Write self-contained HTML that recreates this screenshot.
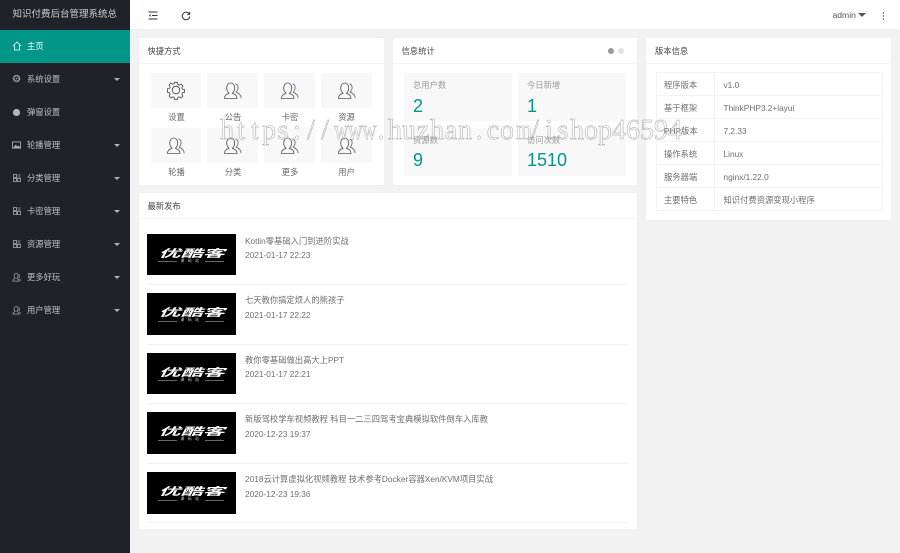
<!DOCTYPE html>
<html lang="zh"><head><meta charset="utf-8"><title>后台</title>
<style>
*{box-sizing:border-box;margin:0;padding:0}
html,body{width:900px;height:553px;overflow:hidden;background:#f2f2f2}
body{font-family:"Liberation Sans","Noto Sans CJK SC",sans-serif;font-size:8.3px;color:#6e6e6e;position:relative;filter:blur(.3px)}
.t{position:absolute;white-space:nowrap;line-height:12px}
.side{position:absolute;left:0;top:0;width:130px;height:553px;background:#20222a}
.top{position:absolute;left:130px;top:0;width:770px;height:29px;background:#fff}
.home{position:absolute;left:0;top:29.500px;width:130px;height:33px;background:#009688}
.m{color:rgba(255,255,255,.7)}
.ar{position:absolute;left:114.300px;margin-top:.5px;width:0;height:0;border:3.200px solid transparent;border-top:3.200px solid rgba(255,255,255,.65);border-bottom:0}
.card{position:absolute;background:#fff;border-radius:1.500px;box-shadow:0 0 1px rgba(0,0,0,.05)}
.hl{position:absolute;left:0;right:0;top:25px;height:1px;background:#f6f6f6}
.ti{color:#444}
.tile{position:absolute;background:#f8f8f8}
.lb{position:absolute;width:51px;text-align:center;color:#666;line-height:12px}
.num{position:absolute;font-size:18px;color:#009688;line-height:20px}
.th{position:absolute;left:147px;width:89px;height:41.500px;background:#000;color:#fff;overflow:hidden}
.logo{position:absolute;left:0;top:12px;width:89px;text-align:center;font:italic 700 10.500px/15px "Noto Sans CJK SC",sans-serif;transform:scaleX(2.100);transform-origin:center}
.sub{position:absolute;left:0;width:89px;top:25px;text-align:center;font-size:3.800px;line-height:5px;color:#ccc;letter-spacing:3.500px}
.sl{position:absolute;height:.5px;top:27.500px;background:#666;width:19px}
.sep{position:absolute;left:147px;width:481px;height:1px;background:#f3f3f3}
.row{position:absolute;left:656px;width:226px;height:1px;background:#f3f3f3}
.wm{position:absolute;left:220px;top:113px;font:28px/36px "Liberation Serif",serif;color:transparent;-webkit-text-stroke:.45px #a0a0a0;white-space:nowrap}
.wm span{display:inline-block;width:14px;text-align:center}
.wm .n{transform:scaleX(.72)}
svg{position:absolute;overflow:visible}
</style></head><body>
<svg width="0" height="0" style="left:0;top:0"><defs>
<g id="u" fill="none" stroke="#555" stroke-width=".85"><path d="M.5 16.500c0-3 1.500-4 4.500-5.200-1.600-1.600-2.300-3.300-2.300-5.300C2.700 3 4.500 1 6.700 1s4 2 4 5c0 2-.7 3.700-2.300 5.300 3 1.200 4.500 2.200 4.500 5.200z"/><path d="M11.500 1.800c2.200.6 3 2.800 2.500 5-.3 1.500-1 2.500-1.800 3.400 2.500 1 4.800 2.500 5 6" stroke="#667"/></g>
<g id="g" fill="none" stroke="#aaa" stroke-width=".8"><rect x=".5" y=".5" width="3" height="3"/><rect x=".5" y="4.500" width="3" height="3"/><rect x="4.500" y="4.500" width="3" height="3"/><path d="M4.500 1h3M4.500 3h3"/></g>
<g id="p" fill="none" stroke="#aaa" stroke-width="1.600"><path d="M2 18c0-4 3-5 5-6-2-2-2.500-4-2.500-6C4.500 3 6.500 1 9 1s4.500 2 4.500 5c0 2-.5 4-2.500 6 2 1 5 2 5 6z"/><path d="M15 3c2 2 2 6 0 8M17 13c1 1 2 2 2 4"/></g>
</defs></svg>

<div class="side"></div>
<div class="top"></div>
<div class="home"></div>
<div class="t" style="left:12.500px;top:9px;font-size:9.500px;color:#cfcfcf">知识付费后台管理系统总</div>

<svg style="left:12px;top:41px" width="10" height="10" viewBox="0 0 10 10" fill="none" stroke="#fff" stroke-width=".8"><path d="M1 5 5 1l4 4M2.400 4.200V9h5.200V4.200"/></svg>
<div class="t" style="left:27px;top:40px;color:#fff">主页</div>

<svg style="left:12px;top:74px" width="9" height="9" viewBox="0 0 10 10"><circle cx="5" cy="5" r="3.200" fill="none" stroke="#aaa" stroke-width="2" stroke-dasharray="1.400 .5"/><circle cx="5" cy="5" r="1" fill="#999"/></svg>
<div class="t m" style="left:27px;top:73px">系统设置</div><div class="ar" style="top:77px"></div>

<svg style="left:12px;top:107.500px" width="9" height="9" viewBox="0 0 10 10"><circle cx="5" cy="5" r="4" fill="#b5b5b5"/></svg>
<div class="t m" style="left:27px;top:106px">弹窗设置</div>

<svg style="left:12px;top:141px" width="9" height="8" viewBox="0 0 10 9"><rect x=".5" y="1" width="9" height="7" fill="none" stroke="#aaa"/><path d="M1 8 4 4l2 2 1.500-1L9 7v1z" fill="#aaa"/></svg>
<div class="t m" style="left:27px;top:139px">轮播管理</div><div class="ar" style="top:143px"></div>

<svg style="left:12.500px;top:174px" width="8" height="8"><use href="#g"/></svg>
<div class="t m" style="left:27px;top:172px">分类管理</div><div class="ar" style="top:176px"></div>

<svg style="left:12.500px;top:207px" width="8" height="8"><use href="#g"/></svg>
<div class="t m" style="left:27px;top:205px">卡密管理</div><div class="ar" style="top:209px"></div>

<svg style="left:12.500px;top:240px" width="8" height="8"><use href="#g"/></svg>
<div class="t m" style="left:27px;top:238px">资源管理</div><div class="ar" style="top:242px"></div>

<svg style="left:12px;top:272.500px" width="9" height="9" viewBox="0 0 20 20"><use href="#p"/></svg>
<div class="t m" style="left:27px;top:271px">更多好玩</div><div class="ar" style="top:275px"></div>

<svg style="left:12px;top:305.500px" width="9" height="9" viewBox="0 0 20 20"><use href="#p"/></svg>
<div class="t m" style="left:27px;top:304px">用户管理</div><div class="ar" style="top:308px"></div>

<!-- top bar -->
<svg style="left:147.500px;top:11px" width="10" height="9" viewBox="0 0 10 9" fill="none" stroke="#333" stroke-width=".9"><path d="M.5 1h9M4 4.500h5.500M.5 8h9"/><path d="M2.500 3 .8 4.500 2.500 6z" fill="#333" stroke="none"/></svg>
<svg style="left:180.500px;top:10.500px" width="10" height="10" viewBox="0 0 10 10" fill="none" stroke="#333" stroke-width="1"><path d="M8.300 3A3.800 3.800 0 1 0 8.800 5.500"/><path d="M8.800.8V3.400H6.200" stroke-width=".9"/></svg>
<div class="t" style="left:832.500px;top:9px;color:#555;font-size:8.600px">admin</div>
<div style="position:absolute;left:858px;top:13px;width:0;height:0;border:4px solid transparent;border-top:4px solid #555;border-bottom:0"></div>
<svg style="left:882px;top:12px" width="3" height="8" viewBox="0 0 3 8" fill="#444"><circle cx="1.500" cy="1" r=".7"/><circle cx="1.500" cy="4" r=".7"/><circle cx="1.500" cy="7" r=".7"/></svg>

<!-- quick card -->
<div class="card" style="left:139px;top:38px;width:244.500px;height:147px"><div class="hl"></div></div>
<div class="t ti" style="left:147.500px;top:45px">快捷方式</div>

<div class="tile" style="left:150.500px;top:73px;width:50.500px;height:35px"></div>
<div class="tile" style="left:207px;top:73px;width:51px;height:35px"></div>
<div class="tile" style="left:264px;top:73px;width:51px;height:35px"></div>
<div class="tile" style="left:321px;top:73px;width:51px;height:35px"></div>
<div class="tile" style="left:150.500px;top:128px;width:50.500px;height:35px"></div>
<div class="tile" style="left:207px;top:128px;width:51px;height:35px"></div>
<div class="tile" style="left:264px;top:128px;width:51px;height:35px"></div>
<div class="tile" style="left:321px;top:128px;width:51px;height:35px"></div>

<svg style="left:167px;top:81px" width="18" height="18" viewBox="0 0 18 18" fill="none" stroke="#444" stroke-width=".85"><circle cx="9" cy="9" r="3.800"/><path d="M7.500.8h3l.4 2.300 1.500.7 2-1.200 2 2.100-1.200 2 .6 1.500 2.300.4v2.900l-2.300.4-.6 1.500 1.200 2-2 2.100-2-1.200-1.500.7-.4 2.300h-3l-.4-2.300-1.500-.7-2 1.200-2-2.100 1.200-2-.6-1.500-2.300-.4V7.600l2.300-.4.6-1.500-1.200-2 2-2.100 2 1.200 1.500-.7z" transform="scale(.94) translate(.6 .6)"/></svg>

<svg style="left:224px;top:82px" width="18" height="17"><use href="#u"/></svg>
<svg style="left:281px;top:82px" width="18" height="17"><use href="#u"/></svg>
<svg style="left:338px;top:82px" width="18" height="17"><use href="#u"/></svg>
<svg style="left:167px;top:137px" width="18" height="17"><use href="#u"/></svg>
<svg style="left:224px;top:137px" width="18" height="17"><use href="#u"/></svg>
<svg style="left:281px;top:137px" width="18" height="17"><use href="#u"/></svg>
<svg style="left:338px;top:137px" width="18" height="17"><use href="#u"/></svg>

<div class="lb" style="left:151px;top:110.500px">设置</div>
<div class="lb" style="left:207.500px;top:110.500px">公告</div>
<div class="lb" style="left:264.500px;top:110.500px">卡密</div>
<div class="lb" style="left:321px;top:110.500px">资源</div>
<div class="lb" style="left:151px;top:165.500px">轮播</div>
<div class="lb" style="left:207.500px;top:165.500px">分类</div>
<div class="lb" style="left:264.500px;top:165.500px">更多</div>
<div class="lb" style="left:321px;top:165.500px">用户</div>

<!-- stats card -->
<div class="card" style="left:392.500px;top:38px;width:244.500px;height:147px"><div class="hl"></div></div>
<div class="t ti" style="left:401.500px;top:45px">信息统计</div>
<div style="position:absolute;left:608px;top:48px;width:6px;height:6px;border-radius:50%;background:#999"></div>
<div style="position:absolute;left:618px;top:48px;width:6px;height:6px;border-radius:50%;background:#e2e2e2"></div>

<div class="tile" style="left:404px;top:72.500px;width:108px;height:48.500px"></div>
<div class="tile" style="left:518px;top:72.500px;width:108px;height:48.500px"></div>
<div class="tile" style="left:404px;top:127.500px;width:108px;height:48.500px"></div>
<div class="tile" style="left:518px;top:127.500px;width:108px;height:48.500px"></div>
<div class="t" style="left:413px;top:79px;color:#999">总用户数</div>
<div class="t" style="left:527px;top:79px;color:#999">今日新增</div>
<div class="t" style="left:413px;top:134px;color:#999">资源数</div>
<div class="t" style="left:527px;top:134px;color:#999">访问次数</div>
<div class="num" style="left:413px;top:95.500px">2</div>
<div class="num" style="left:527px;top:95.500px">1</div>
<div class="num" style="left:413px;top:150px">9</div>
<div class="num" style="left:527px;top:150px">1510</div>

<!-- version card -->
<div class="card" style="left:646px;top:38px;width:245px;height:182px"><div class="hl"></div></div>
<div class="t ti" style="left:655px;top:45px">版本信息</div>
<div style="position:absolute;left:655.500px;top:72px;width:227px;height:139px;border:1px solid #f4f4f4"></div>
<div style="position:absolute;left:714px;top:72px;width:1px;height:139px;background:#eee"></div>
<div class="row" style="top:95px"></div><div class="row" style="top:118px"></div><div class="row" style="top:141px"></div><div class="row" style="top:164px"></div><div class="row" style="top:187px"></div>
<div class="t" style="left:664px;top:78.500px">程序版本</div><div class="t" style="left:723.500px;top:78.500px">v1.0</div>
<div class="t" style="left:664px;top:101.500px">基于框架</div><div class="t" style="left:723.500px;top:101.500px">ThinkPHP3.2+layui</div>
<div class="t" style="left:664px;top:124.500px">PHP版本</div><div class="t" style="left:723.500px;top:124.500px">7.2.33</div>
<div class="t" style="left:664px;top:147.500px">操作系统</div><div class="t" style="left:723.500px;top:147.500px">Linux</div>
<div class="t" style="left:664px;top:170.500px">服务器端</div><div class="t" style="left:723.500px;top:170.500px">nginx/1.22.0</div>
<div class="t" style="left:664px;top:193.500px">主要特色</div><div class="t" style="left:723.500px;top:193.500px">知识付费资源变现小程序</div>

<!-- latest card -->
<div class="card" style="left:139px;top:193px;width:498px;height:336px"><div class="hl"></div></div>
<div class="t ti" style="left:147.500px;top:200px">最新发布</div>

<div class="th" style="top:233.700px"><div class="logo">优酷客</div><div class="sl" style="left:11px"></div><div class="sl" style="left:58px"></div><div class="sub">课码站</div></div>
<div class="t" style="left:245px;top:234.500px">Kotlin零基础入门到进阶实战</div>
<div class="t" style="left:245px;top:249px">2021-01-17 22:23</div>
<div class="sep" style="top:284px"></div>

<div class="th" style="top:293.200px"><div class="logo">优酷客</div><div class="sl" style="left:11px"></div><div class="sl" style="left:58px"></div><div class="sub">课码站</div></div>
<div class="t" style="left:245px;top:294px">七天教你搞定烦人的熊孩子</div>
<div class="t" style="left:245px;top:308.500px">2021-01-17 22:22</div>
<div class="sep" style="top:343.500px"></div>

<div class="th" style="top:352.800px"><div class="logo">优酷客</div><div class="sl" style="left:11px"></div><div class="sl" style="left:58px"></div><div class="sub">课码站</div></div>
<div class="t" style="left:245px;top:353.500px">教你零基础做出高大上PPT</div>
<div class="t" style="left:245px;top:368px">2021-01-17 22:21</div>
<div class="sep" style="top:403px"></div>

<div class="th" style="top:412.400px"><div class="logo">优酷客</div><div class="sl" style="left:11px"></div><div class="sl" style="left:58px"></div><div class="sub">课码站</div></div>
<div class="t" style="left:245px;top:413px">新版驾校学车视频教程 科目一二三四驾考宝典模拟软件倒车入库教</div>
<div class="t" style="left:245px;top:428px">2020-12-23 19:37</div>
<div class="sep" style="top:462.500px"></div>

<div class="th" style="top:472px"><div class="logo">优酷客</div><div class="sl" style="left:11px"></div><div class="sl" style="left:58px"></div><div class="sub">课码站</div></div>
<div class="t" style="left:245px;top:473px">2018云计算虚拟化视频教程 技术参考Docker容器Xen/KVM项目实战</div>
<div class="t" style="left:245px;top:487.500px">2020-12-23 19:36</div>
<div class="sep" style="top:522px"></div>

<div class="wm"><span>h</span><span>t</span><span>t</span><span>p</span><span>s</span><span>:</span><span>/</span><span>/</span><span class="n">w</span><span class="n">w</span><span class="n">w</span><span>.</span><span>h</span><span>u</span><span>z</span><span>h</span><span>a</span><span>n</span><span>.</span><span>c</span><span>o</span><span class="n">m</span><span>/</span><span>i</span><span>s</span><span>h</span><span>o</span><span>p</span><span>4</span><span>6</span><span>5</span><span>9</span><span>4</span></div>
</body></html>
